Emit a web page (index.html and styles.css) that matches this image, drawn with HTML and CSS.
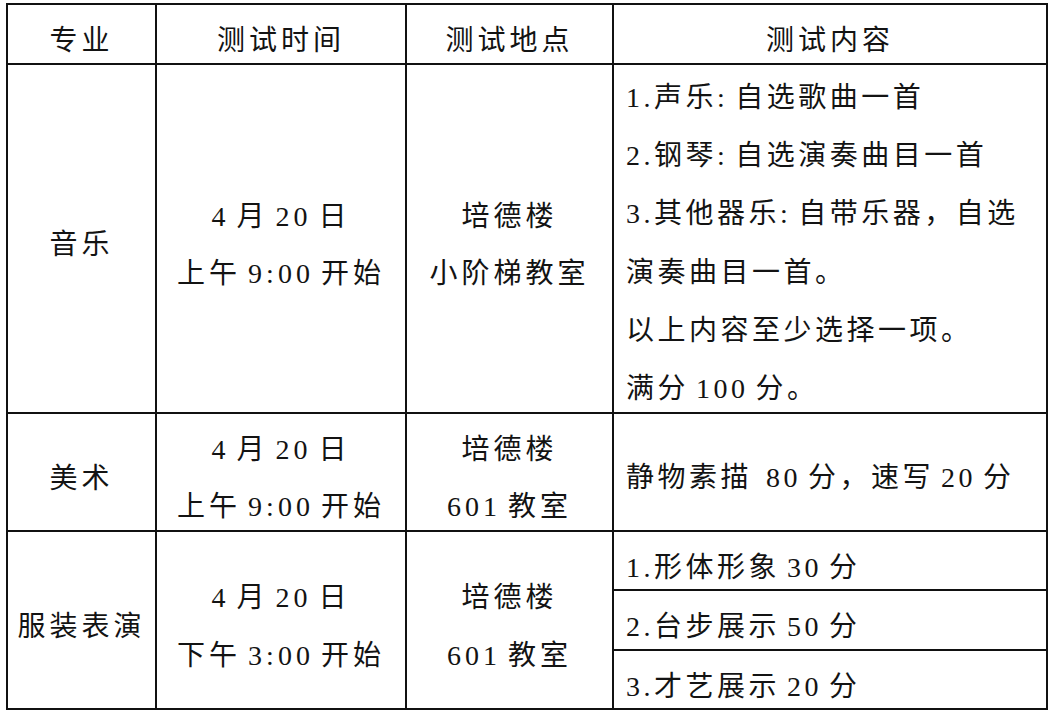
FILE: index.html
```html
<!DOCTYPE html>
<html lang="zh-CN">
<head>
<meta charset="utf-8">
<title>测试安排</title>
<link rel="stylesheet" href="styles.css">
</head>
<body>
<table class="schedule">
  <colgroup>
    <col class="c-major">
    <col class="c-time">
    <col class="c-place">
    <col class="c-content">
  </colgroup>
  <thead>
    <tr class="row-head">
      <th><div class="head">专业</div></th>
      <th><div class="head">测试时间</div></th>
      <th><div class="head">测试地点</div></th>
      <th><div class="head">测试内容</div></th>
    </tr>
  </thead>
  <tbody>
    <tr class="row-music">
      <td><div class="mid">音乐</div></td>
      <td><div class="mid">4 月 20 日<br>上午 9:00 开始</div></td>
      <td><div class="mid">培德楼<br>小阶梯教室</div></td>
      <td class="top"><div class="list">1.声乐: 自选歌曲一首<br>2.钢琴: 自选演奏曲目一首<br>3.其他器乐: 自带乐器，自选<br>演奏曲目一首。<br>以上内容至少选择一项。<br>满分 100 分。</div></td>
    </tr>
    <tr class="row-art">
      <td><div class="mid">美术</div></td>
      <td><div class="mid">4 月 20 日<br>上午 9:00 开始</div></td>
      <td><div class="mid">培德楼<br>601 教室</div></td>
      <td><div class="item">静物素描 &nbsp;80 分，速写 20 分</div></td>
    </tr>
    <tr class="row-sub1">
      <td rowspan="3"><div class="mid">服装表演</div></td>
      <td rowspan="3"><div class="mid tall">4 月 20 日<br>下午 3:00 开始</div></td>
      <td rowspan="3"><div class="mid tall">培德楼<br>601 教室</div></td>
      <td><div class="item sub">1.形体形象 30 分</div></td>
    </tr>
    <tr class="row-sub2">
      <td><div class="item sub">2.台步展示 50 分</div></td>
    </tr>
    <tr class="row-sub3">
      <td><div class="item sub">3.才艺展示 20 分</div></td>
    </tr>
  </tbody>
</table>
</body>
</html>
```

FILE: styles.css
```css
html, body {
  margin: 0;
  padding: 0;
  background: #ffffff;
}

body {
  padding: 3px 0 0 6px;
  font-family: "Liberation Serif", "Noto Sans CJK SC", serif;
  color: #131313;
}

.schedule {
  border-collapse: collapse;
  table-layout: fixed;
  width: 1040px;
  font-size: 28px;
  letter-spacing: 4px;
  word-spacing: -4px;
}

.c-major { width: 149px; }
.c-time { width: 250px; }
.c-place { width: 207px; }
.c-content { width: 434px; }

.schedule th,
.schedule td {
  border: 2px solid #111111;
  padding: 0;
  font-weight: normal;
  vertical-align: middle;
  text-align: center;
}

.schedule td.top {
  vertical-align: top;
}

.row-head { height: 60px; }
.row-music { height: 349px; }
.row-art { height: 118px; }
.row-sub1 { height: 59px; }
.row-sub2 { height: 60px; }
.row-sub3 { height: 59px; }

.head {
  line-height: 40px;
  margin: 7px 0 -7px;
}

.mid {
  line-height: 57px;
  margin: 6px 0 -6px;
}

.mid.tall {
  line-height: 58px;
  margin: 7px 0 -7px;
}

.list {
  text-align: left;
  line-height: 58.2px;
  padding-left: 12px;
  margin: 4px 0 -14px;
  letter-spacing: 3.5px;
  word-spacing: -3.5px;
}

.item {
  text-align: left;
  line-height: 44px;
  padding-left: 12px;
  margin: 6px 0 -6px;
  letter-spacing: 3.5px;
  word-spacing: -3.5px;
}

.item.sub {
  margin: 7px 0 -7px;
}
```
